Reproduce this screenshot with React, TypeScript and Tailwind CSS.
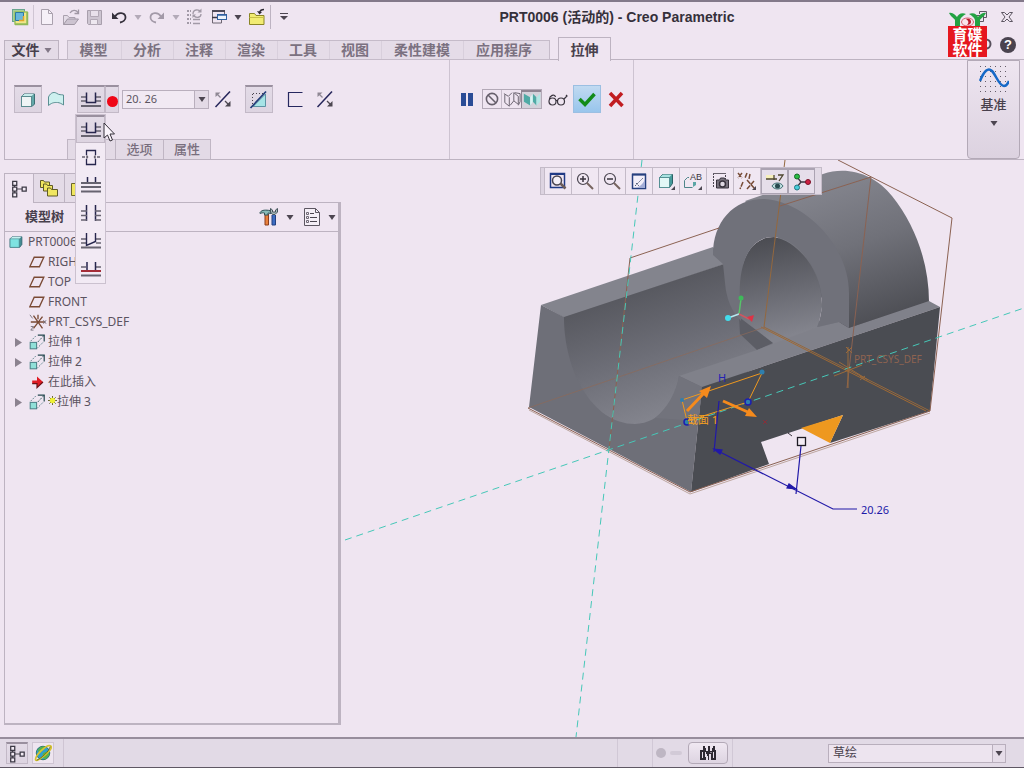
import React, { useState } from "react";
import type { ReactNode } from "react";

/* ---------- small shared pieces ---------- */

function Caret({ className = "text-[#4c4550]" }: { className?: string }) {
  return (
    <svg viewBox="0 0 8 5" className={`h-[5px] w-2 shrink-0 ${className}`} aria-hidden="true">
      <path d="M0.5 0h7L4 5z" fill="currentColor" />
    </svg>
  );
}

function Ico({ children, size = "size-5" }: { children: ReactNode; size?: string }) {
  return (
    <svg viewBox="0 0 20 20" className={`${size} shrink-0`} fill="none" aria-hidden="true">
      {children}
    </svg>
  );
}

function QuickButton({ label, width = "w-6", children }: { label: string; width?: string; children: ReactNode }) {
  return (
    <button type="button" aria-label={label} className={`flex h-6 shrink-0 items-center justify-center ${width}`}>
      {children}
    </button>
  );
}

/* ---------- icons ---------- */

const AppIcon = () => (
  <Ico>
    <rect x="2.500" y="2.500" width="12" height="12" fill="#a7cf9a" stroke="#6aa58f" />
    <path d="M5 5h12v12H5z" fill="#f0e58a" stroke="#9cc25c" strokeWidth="1.500" />
    <path d="M5.500 5.500h8v8h-8z" fill="#68b7dc" stroke="#2d7aa5" />
    <path d="M13.500 9v4.500H9" stroke="#e1a629" strokeWidth="1.500" />
    <path d="M5 17.500h12.500V5" stroke="#8fb85a" strokeWidth="1.500" />
  </Ico>
);
const NewIcon = () => (
  <Ico>
    <path d="M4.500 2.500h7l4 4v11h-11z" fill="#f6f0f8" stroke="#aaa1ae" />
    <path d="M11.500 2.500v4h4" stroke="#aaa1ae" />
  </Ico>
);
const OpenIcon = () => (
  <Ico>
    <path d="M2.500 17.500v-9h4l1.500 2h6v2" fill="#e4dce7" stroke="#aaa1ae" />
    <path d="M2.500 17.500l4-5.500h11l-4 5.500z" fill="#ccc3d0" stroke="#a097a4" />
    <path d="M9 6c2-3.500 6-3.500 8-.5M17.500 2.500v4h-4" stroke="#a097a4" strokeWidth="1.300" />
  </Ico>
);
const SaveIcon = () => (
  <Ico>
    <path d="M3.500 3.500h14v14h-13l-1-1z" fill="#cdc5d1" stroke="#a89fac" />
    <path d="M6.500 3.500h8v6h-8z" fill="#e8e1eb" stroke="#b2a9b6" />
    <path d="M6.500 12.500h7v5h-7z" fill="#eee8f0" stroke="#b2a9b6" />
  </Ico>
);
const UndoIcon = ({ color }: { color: string }) => (
  <Ico>
    <path d="M6 9.500C9 4.500 16 5.500 16.500 10c.3 3-2.500 5-5.500 5.500" stroke={color} strokeWidth="1.800" />
    <path d="M3 5.500v6.500h6.500z" fill={color} />
  </Ico>
);
const RedoIcon = ({ color }: { color: string }) => (
  <Ico>
    <path d="M14 9.500C11 4.500 4 5.500 3.500 10c-.3 3 2.500 5 5.500 5.500" stroke={color} strokeWidth="1.800" />
    <path d="M17 5.500v6.500h-6.500z" fill={color} />
  </Ico>
);
const RegenIcon = () => (
  <Ico>
    <path d="M3 4h4M3 8h4M3 12h4M3 16h4" stroke="#a29aa7" strokeWidth="2" strokeDasharray="2 1" />
    <path d="M9 12.500h7M9 16.500h7" stroke="#a29aa7" strokeWidth="1.500" />
    <path d="M9 7c0-5 6-5 7.500-2M17 7c0 4-5 4-7 2" stroke="#a29aa7" strokeWidth="1.300" />
    <path d="M17.500 1.500v4h-4zM8.500 11V7.500H12z" fill="#a29aa7" />
  </Ico>
);
const WindowsIcon = () => (
  <Ico>
    <path d="M3.500 4.500h12v3" stroke="#6d6672" />
    <path d="M3 4h13" stroke="#4f4a58" strokeWidth="2" />
    <path d="M3.500 5v11h9v-3" stroke="#6d6672" />
    <path d="M3 10.500h6" stroke="#3a3846" strokeWidth="1.500" />
    <rect x="8.500" y="7.500" width="9" height="5" fill="#eef4fb" stroke="#3261a0" />
    <path d="M8 8h10" stroke="#3261a0" strokeWidth="1.500" />
  </Ico>
);
const CloseWindowIcon = () => (
  <Ico>
    <path d="M2.500 17.500v-11h5l1.500 2h8v9z" fill="#f2ec73" stroke="#8a8526" />
    <path d="M2.500 10.500h14.500" stroke="#c9c147" />
    <path d="M17 2.500c-2.500 0-4 1-4.500 3" stroke="#2e2a34" strokeWidth="1.300" />
    <path d="M10 4l2.500 3.500L15 5z" fill="#2e2a34" />
  </Ico>
);

const SolidIcon = () => (
  <Ico>
    <path d="M3.500 6.500l2.500-2.500h10.500v10l-2.500 2.500h-10.500z" fill="#62a9a9" stroke="#3c6f74" />
    <rect x="3.500" y="6.500" width="10" height="10" fill="#eef4f5" stroke="#5a8b8f" />
    <path d="M4 6l2.500-2h9.500L13.500 6z" fill="#c7eceb" />
  </Ico>
);
const SurfaceIcon = () => (
  <Ico>
    <path d="M2.500 16.500V8C5 2.500 9 3 11 4.500s4 1 6.500 1.500v10c-1.500-1-4-2.500-6-2.500s-5-.5-9 3z" fill="#cdf0ef" stroke="#5b8f93" />
  </Ico>
);

const NAVY = "#27264d";
const GREY = "#676370";
const DEPTH_OPTIONS: { label: string; draw: ReactNode }[] = [
  {
    label: "盲孔",
    draw: (
      <>
        <path d="M0 7h5M15 7h5M0 11h5M15 11h5" stroke={GREY} strokeWidth="1.500" />
        <path d="M5.500 2.500v10h9v-10" stroke={NAVY} strokeWidth="1.500" />
        <path d="M0 16h20" stroke={GREY} strokeWidth="2" />
      </>
    ),
  },
  {
    label: "对称",
    draw: (
      <>
        <path d="M5.500 8V3.500h9V8M5.500 12v5.500h9V12" stroke={NAVY} strokeWidth="1.300" />
        <path d="M1 10h3M5 10h2M13 10h2M16 10h3" stroke={GREY} strokeWidth="1.300" />
        <path d="M5.500 8l1.500 2-1.500 2M14.500 8L13 10l1.500 2" stroke={GREY} />
      </>
    ),
  },
  {
    label: "到下一个",
    draw: (
      <>
        <path d="M6.500 2v5M14.500 2v5" stroke={NAVY} strokeWidth="1.500" />
        <path d="M0 8h20M0 12h20M0 16.500h20" stroke={GREY} strokeWidth="2" />
      </>
    ),
  },
  {
    label: "穿透",
    draw: (
      <>
        <path d="M5.500 2v16M14.500 2v16" stroke={NAVY} strokeWidth="1.500" />
        <path d="M0 8h6M0 12.500h6M0 17h6M14 8h6M14 12.500h6M14 17h6" stroke={GREY} strokeWidth="1.700" />
      </>
    ),
  },
  {
    label: "穿至",
    draw: (
      <>
        <path d="M0 8h5M0 12h5M15 8h5M15 12h5" stroke={GREY} strokeWidth="1.500" />
        <path d="M5.500 2v12.500l9-4V2" stroke={NAVY} strokeWidth="1.400" />
        <path d="M0 16.500h20" stroke={GREY} strokeWidth="2" />
      </>
    ),
  },
  {
    label: "到选定项",
    draw: (
      <>
        <path d="M0 8h5M15 8h5" stroke={GREY} strokeWidth="1.500" />
        <path d="M6 3v8M14.500 3v8" stroke={NAVY} strokeWidth="1.500" />
        <path d="M0 12h20" stroke="#a42d38" strokeWidth="2" />
        <path d="M0 16.500h20" stroke={GREY} strokeWidth="2" />
      </>
    ),
  },
];

const FlipIcon = () => (
  <Ico>
    <path d="M2.500 18L17 2.500" stroke="#25255a" strokeWidth="1.500" />
    <path d="M4 5l3.500 3.500" stroke="#8f8894" strokeWidth="1.300" />
    <path d="M2.500 3.500h5L2.500 8z" fill="#8f8894" />
    <path d="M12 12l4 4" stroke="#4c4750" strokeWidth="1.300" />
    <path d="M17.500 17.500V12L12 17.500z" fill="#4c4750" />
  </Ico>
);
const RemoveMaterialIcon = () => (
  <Ico>
    <path d="M4 16.500L16.500 4v12.500z" fill="#a6e4e6" stroke="#5d93a4" />
    <path d="M4 3.500h10M3.500 4v10" stroke="#48434d" strokeDasharray="1 2" />
    <path d="M1.500 18L17 1.500" stroke="#223c79" strokeWidth="1.700" />
  </Ico>
);
const ThickenIcon = () => (
  <Ico>
    <path d="M17.500 3.500h-14v14h14" stroke="#26285f" strokeWidth="1.200" />
  </Ico>
);

const PlaneIcon = () => (
  <Ico size="size-4">
    <path d="M6.500 4h12l-5.500 12h-12z" stroke="#7a4a35" strokeWidth="1.700" />
  </Ico>
);
const CsysIcon = () => (
  <Ico size="size-[18px]">
    <path d="M2 10h16M5 3l10 14M15 4L5 17M10 2v5" stroke="#7a4a35" strokeWidth="1.500" />
    <path d="M1 2l3 4M16 8l3 4M19 8l-3 4M2 15h3l-3 4h3" stroke="#77707c" />
  </Ico>
);
const ExtrudeIcon = () => (
  <Ico size="size-4">
    <rect x="1.500" y="10.500" width="8" height="8" fill="#8fe0d8" stroke="#4c8288" strokeWidth="1.300" />
    <path d="M2 9l7-7M10 18l8-8" stroke="#376c72" strokeDasharray="2 1.500" />
    <path d="M11 1.500h8v8" stroke="#23474e" strokeWidth="1.500" />
    <path d="M19 1.500L11 10" stroke="#23474e" strokeDasharray="3 1.500" />
  </Ico>
);
const InsertIcon = () => (
  <Ico size="size-4">
    <path d="M4 8h6V3l7.500 7L10 17v-5H4z" fill="#e01c25" />
    <path d="M4 12h6v5l7.500-7" stroke="#6b1116" strokeWidth="1.500" />
  </Ico>
);
const SparkIcon = () => (
  <Ico size="size-[9px]">
    <path d="M10 0v20M0 10h20M3 3l14 14M17 3L3 17" stroke="#57561d" strokeWidth="2" />
    <circle cx="10" cy="10" r="6" fill="#eef035" />
  </Ico>
);
const TreeIcon = () => (
  <Ico size="size-[18px]">
    <path d="M5 5v10M6 10h9" stroke="#49454e" strokeWidth="1.300" />
    <path d="M3 1.500h4.500V6H3zM3 7.800h4.500v4.500H3zM3 14.200h4.500v4.500H3zM13.500 7.800H18v4.500h-4.500z" fill="#f2ebf4" stroke="#3b3844" strokeWidth="1.400" />
  </Ico>
);
const FoldersIcon = () => (
  <Ico>
    <g fill="#f0e660" stroke="#5f5b26">
      <path d="M1.500 9.500v-7h3l1 1.500h5v5.500z" />
      <path d="M4.500 13v-7h3l1 1.500h5V13z" />
      <path d="M8.500 18V10h3l1 1.500h6V18z" />
    </g>
  </Ico>
);
const FolderStarIcon = () => (
  <Ico>
    <path d="M3.500 17.500v-12h4l1.500 2h8v10z" fill="#f0e660" stroke="#6d6829" />
  </Ico>
);
const ToolsIcon = () => (
  <Ico>
    <path d="M6 7v11h3.500V7" fill="#e9813d" stroke="#8b3d1c" />
    <path d="M1 5.500c2-3 6-2.500 10-2l1 3-3-.5v2H5.500V6C4 5.500 2 6 1 6.500z" fill="#86bcb8" stroke="#34545b" />
    <path d="M13 8v10h3.500V8" fill="#3c6cc2" stroke="#234080" />
    <path d="M11.500 1.500v3.500l2 2.500h2.500l2.500-2.500V1.500L16.500 3v2h-3V3z" fill="#a5b9bb" stroke="#46555b" />
  </Ico>
);
const ListIcon = () => (
  <Ico>
    <path d="M2.500 1.500h11l4 4v13h-15z" fill="#f4eef6" stroke="#5c5661" />
    <path d="M13.500 1.500v4h4" stroke="#5c5661" />
    <path d="M8 6.500h4M8 10.500h7M8 14.500h7" stroke="#4a454f" />
    <path d="M4.500 5.500h2v2h-2zM4.500 9.500h2v2h-2zM4.500 13.500h2v2h-2z" stroke="#6f6874" />
  </Ico>
);

/* ---------- title bar ---------- */

function TitleBar() {
  return (
    <header className="flex h-[37px] items-center border-t-2 border-[#83798a] pb-[5px] pl-[7px]">
      <QuickButton label="Creo" width="w-[26px]"><AppIcon /></QuickButton>
      <span className="h-6 w-px bg-[#cfc5d3]" />
      <QuickButton label="新建" width="w-[26px]"><NewIcon /></QuickButton>
      <QuickButton label="打开" width="w-[22px]"><OpenIcon /></QuickButton>
      <QuickButton label="保存"><SaveIcon /></QuickButton>
      <QuickButton label="撤消" width="w-[26px]"><UndoIcon color="#35313c" /></QuickButton>
      <QuickButton label="撤消列表" width="w-3"><Caret className="text-[#b3aab8]" /></QuickButton>
      <QuickButton label="重做" width="w-[26px]"><RedoIcon color="#a39aa8" /></QuickButton>
      <QuickButton label="重做列表" width="w-3"><Caret className="text-[#b3aab8]" /></QuickButton>
      <QuickButton label="重新生成"><RegenIcon /></QuickButton>
      <QuickButton label="窗口" width="w-[26px]"><WindowsIcon /></QuickButton>
      <QuickButton label="窗口列表" width="w-3"><Caret /></QuickButton>
      <QuickButton label="关闭窗口" width="w-[26px]"><CloseWindowIcon /></QuickButton>
      <span className="h-6 w-px bg-[#bdb3c2]" />
      <QuickButton label="自定义快速访问工具栏" width="w-[26px]">
        <svg viewBox="0 0 8 8" className="size-2" aria-hidden="true">
          <path d="M0 .5h8" stroke="#4c4550" />
          <path d="M0 3h8L4 7z" fill="#4c4550" />
        </svg>
      </QuickButton>
      <h1 className="min-w-0 flex-1 truncate text-center font-['Liberation_Sans','Noto_Sans_CJK_SC',sans-serif] text-[14px] font-bold text-[#35303a]">
        PRT0006 (活动的) - Creo Parametric
      </h1>
      <div className="flex w-[87px] justify-end gap-3 pr-[10px]">
        <button type="button" aria-label="还原">
          <svg viewBox="0 0 14 14" className="size-[14px]" fill="none" stroke="#5e5763" aria-hidden="true">
            <path d="M5.500 4V1.500h7v6H10M1.500 5.500h8v6h-8z" />
          </svg>
        </button>
        <button type="button" aria-label="关闭">
          <svg viewBox="0 0 14 14" className="size-[14px]" fill="none" stroke="#5e5763" aria-hidden="true">
            <path d="M1.500 2.500h3L7 5l2.500-2.500h3L9 7l3.500 4.500h-3L7 9l-2.500 2.500h-3L5 7z" />
          </svg>
        </button>
      </div>
    </header>
  );
}

/* ---------- ribbon ---------- */

const TABS = ["模型", "分析", "注释", "渲染", "工具", "视图", "柔性建模", "应用程序"];

function TabStrip() {
  return (
    <nav className="flex h-[23px] items-end pl-1 text-[14px] leading-[18px] font-bold text-[#7b7180]">
      <button type="button" className="flex h-5 w-[55px] shrink-0 items-center justify-center gap-1 border border-[#bdb3c1] bg-[#e4dbe7] text-[#48404c]">
        文件 <Caret className="text-[#817786]" />
      </button>
      <span className="h-px w-2 shrink-0 bg-[#bdb3c1]" />
      <div className="flex h-5 shrink-0 items-center border border-[#c5bbc9] bg-[#e5dce8] pr-[3px]">
        {TABS.map((t, i) => (
          <button
            key={t}
            type="button"
            className={`${t.length > 2 ? "w-[83px]" : "w-[53px]"} pr-[3px] ${i > 0 ? "-ml-px border-l border-[#d8cfdc] pl-px" : "w-[54px]"}`}
          >
            {t}
          </button>
        ))}
      </div>
      <span className="h-px min-w-2 shrink-0 bg-[#bdb3c1]" />
      <button type="button" className="-mb-px h-6 w-[53px] shrink-0 border border-b-0 border-[#bdb3c1] bg-[#efe5f1] text-[#48404c]">
        拉伸
      </button>
      <span className="h-px min-w-4 flex-1 bg-[#bdb3c1]" />
      <div className="flex h-[23px] w-[44px] shrink-0 items-start justify-between border-b border-[#bdb3c1] pr-2">
        <svg viewBox="0 0 16 16" className="size-4" fill="none" aria-hidden="true">
          <circle cx="6" cy="7" r="4.500" stroke="#57505c" strokeWidth="2" />
        </svg>
        <button type="button" aria-label="帮助" className="flex size-4 items-center justify-center rounded-full bg-[#4a434f] font-['Liberation_Sans',sans-serif] text-[13px] leading-4 text-white">
          ?
        </button>
      </div>
    </nav>
  );
}

function SproutLogo() {
  return (
    <div className="absolute top-[11px] right-[37px] z-10 w-[39px]">
      <svg viewBox="0 0 39 15" className="block h-[15px] w-full" aria-hidden="true">
        <path d="M1 2c4-1 6 2 8 4 1-2 4-5 9-3-3 2-5 3-6 6v6H7v-6C6 7 3 6 1 2z" fill="#23a243" />
        <path d="M38 2c-4-1-6 2-8 4-1-2-4-5-9-3 3 2 5 3 6 6v6h5v-6c1-2 4-3 6-7z" fill="#23a243" />
        <ellipse cx="19.500" cy="11" rx="6" ry="4" fill="#f9e3ea" stroke="#d8606f" />
        <path d="M18 8c4-1 5 1 5 3s-2 3-4 3c2-2 2-4-1-6z" fill="#b9182c" />
      </svg>
      <div className="bg-[#e6171f] px-1 pb-px text-center font-['Noto_Sans_CJK_SC',sans-serif] text-[15px] leading-[15px] font-bold break-all text-white">
        育碟软件
      </div>
    </div>
  );
}

const PRESSED = "border border-t-2 border-[#c3b9c7] border-t-[#9a909f] bg-linear-to-b from-[#e3dbe7] to-[#ddd4e1]";

function DepthPicker() {
  const [picked, setPicked] = useState(0);
  return (
    <div className="relative flex shrink-0">
      <button type="button" aria-label="深度选项" className={`flex size-7 items-center justify-center ${PRESSED}`}>
        <Ico>{DEPTH_OPTIONS[picked].draw}</Ico>
      </button>
      <button type="button" aria-label="展开深度选项" className={`flex h-7 w-[14px] items-center justify-center pt-1 ${PRESSED}`}>
        <svg viewBox="0 0 10 10" className="size-[11px] shrink-0" aria-hidden="true"><circle cx="5" cy="5" r="5" fill="#ef0717" /></svg>
      </button>
      <ul className="absolute top-[29px] -left-[2px] z-20 w-[31px] border border-[#cbc1cf] bg-[#f2eaf4]">
        {DEPTH_OPTIONS.map((o, i) => (
          <li key={o.label}>
            <button
              type="button"
              aria-label={o.label}
              onClick={() => setPicked(i)}
              className={`flex h-7 w-full items-center justify-center ${i === picked ? PRESSED : ""}`}
            >
              <Ico>{o.draw}</Ico>
            </button>
          </li>
        ))}
      </ul>
      <svg viewBox="0 0 12 20" className="absolute top-[37px] left-[26px] z-30 h-5 w-3" aria-hidden="true">
        <path d="M1 1v15l3.500-3 2.500 6 2.500-1-2.500-6h4.500z" fill="#fbf5fc" stroke="#35303a" />
      </svg>
    </div>
  );
}

function Dashboard() {
  return (
    <section className="ml-1 flex h-[100px] border-b border-l border-[#bdb3c1]">
      <div className="flex w-[445px] shrink-0 flex-col justify-between border-r border-[#cdc3d1] pt-[25px]">
        <div className="flex items-center pl-[9px]">
          <button type="button" aria-label="实体" className={`flex size-7 items-center justify-center ${PRESSED}`}><SolidIcon /></button>
          <button type="button" aria-label="曲面" className="mr-[7px] flex size-7 items-center justify-center"><SurfaceIcon /></button>
          <DepthPicker />
          <div className="ml-[3px] flex h-[19px] w-[87px] shrink-0 border border-[#b9afbd] bg-[#f1e9f3]">
            <input
              aria-label="深度值"
              defaultValue="20. 26"
              className="min-w-0 flex-1 bg-transparent pl-[3px] font-['Noto_Sans',sans-serif] text-[11px] text-[#5c5561] outline-none"
            />
            <button type="button" aria-label="深度值列表" className="flex w-[14px] items-center justify-center border-l border-[#b9afbd] bg-[#e3dae6]"><Caret /></button>
          </div>
          <button type="button" aria-label="反向" className="mr-2 flex size-7 items-center justify-center"><FlipIcon /></button>
          <button type="button" aria-label="移除材料" className={`mr-2 flex size-7 items-center justify-center ${PRESSED}`}><RemoveMaterialIcon /></button>
          <button type="button" aria-label="加厚" className="mr-[2px] flex size-7 items-center justify-center"><ThickenIcon /></button>
          <button type="button" aria-label="反向厚度" className="flex size-7 items-center justify-center"><FlipIcon /></button>
        </div>
        <div className="ml-[62px] flex w-fit border border-b-0 border-[#c0b6c4] bg-[#e3dae6] text-[13px] leading-[19px] font-medium text-[#786e7d]">
          <button type="button" className="w-[47px]">放置</button>
          <button type="button" className="w-12 border-l border-[#c0b6c4]">选项</button>
          <button type="button" className="w-[47px] border-l border-[#c0b6c4]">属性</button>
        </div>
      </div>
      <div className="flex w-[184px] shrink-0 items-start border-r border-[#cdc3d1] pt-[25px]">
        <button type="button" aria-label="暂停" className="ml-[3px] flex size-7 items-center justify-center">
          <Ico><path d="M4 4h5v13H4zM11 4h5v13h-5z" fill="#2a4c96" /></Ico>
        </button>
        <div className="mt-1 ml-px flex h-5 w-[60px] shrink-0 border border-[#b3a9b7]">
          <button type="button" aria-label="无预览" className="flex w-[18px] items-center justify-center">
            <Ico size="size-4"><circle cx="10" cy="10" r="7" stroke="#67606c" strokeWidth="2" /><path d="M5 5l10 10" stroke="#67606c" strokeWidth="2" /></Ico>
          </button>
          <button type="button" aria-label="未附着" className="flex w-5 items-center justify-center border-l border-[#c6bcca]">
            <Ico size="size-[18px]"><path d="M1 4l5 3 4-4M2 5v9l5 4V8M8 17l4-5V3l5 4v9l-5-4M13 3l6 1v9l-2 4" stroke="#6d6672" strokeWidth="1.100" /></Ico>
          </button>
          <button type="button" aria-label="附着" className="flex w-5 items-center justify-center border-t-2 border-l border-[#8f8593] bg-[#d3d2db]">
            <Ico size="size-[18px]"><path d="M1 3l7 4v9l-7-4z" fill="#4faaa5" /><path d="M8 7l3-4v9l-3 4z" fill="#d7f5f3" /><path d="M11 3l4 4v9l-4-4z" fill="#4faaa5" /><path d="M15 7l4-4v9l-4 4z" fill="#b2e7e5" /></Ico>
          </button>
        </div>
        <button type="button" aria-label="特征预览" className="ml-[2px] flex size-7 items-center justify-center">
          <Ico><circle cx="4.500" cy="12.500" r="3.500" stroke="#39343e" strokeWidth="1.200" /><circle cx="13" cy="12.500" r="3.500" stroke="#39343e" strokeWidth="1.200" /><path d="M8 11.500h1.500M1.500 10c0-3 5-6 6-2M16 10l3-3-1-1" stroke="#39343e" strokeWidth="1.200" /></Ico>
        </button>
        <button type="button" aria-label="确定" className="ml-px flex size-7 items-center justify-center border border-[#9bbfe2] bg-linear-to-b from-[#c1daf1] to-[#98c5ec]">
          <Ico><path d="M2.500 10l5.500 5.500L17.500 5" stroke="#128b18" strokeWidth="3.500" /></Ico>
        </button>
        <button type="button" aria-label="取消" className="ml-px flex size-7 items-center justify-center">
          <Ico><path d="M4 4l12.500 13M16 4L4 17" stroke="#c11d21" strokeWidth="3.500" /></Ico>
        </button>
      </div>
      <button type="button" className="mr-1 ml-auto flex w-[53px] shrink-0 flex-col items-center rounded-b border border-[#b3a9b7] bg-linear-to-b from-[#eee5f0] to-[#dcd2e0] pt-[3px] text-[13px] leading-[18px] font-medium text-[#48404c]">
        <svg viewBox="0 0 30 30" className="size-[30px]" aria-hidden="true">
          {[2, 7, 12, 17, 22, 27].map((y) => (
            <path key={y} d={`M1 ${y}.500h29`} stroke="#655e6a" strokeDasharray="1 4" />
          ))}
          <path d="M1 17C5 7 9 3 13 7s7 15 12 15c3 0 4-3 5-5" fill="none" stroke="#1669c7" strokeWidth="2.500" />
        </svg>
        <span className="mt-px mb-2">基准</span>
        <Caret />
      </button>
    </section>
  );
}

/* ---------- model tree ---------- */

type TreeNode = { text: string; icon: ReactNode; open?: boolean; spark?: boolean };
const NODES: TreeNode[] = [
  { text: "RIGHT", icon: <PlaneIcon /> },
  { text: "TOP", icon: <PlaneIcon /> },
  { text: "FRONT", icon: <PlaneIcon /> },
  { text: "PRT_CSYS_DEF", icon: <CsysIcon /> },
  { text: "拉伸 1", icon: <ExtrudeIcon />, open: true },
  { text: "拉伸 2", icon: <ExtrudeIcon />, open: true },
  { text: "在此插入", icon: <InsertIcon /> },
  { text: "拉伸 3", icon: <ExtrudeIcon />, open: true, spark: true },
];

function ModelTree() {
  return (
    <aside className="flex w-[337px] shrink-0 flex-col pt-[13px] pb-3">
      <div className="flex h-[30px] shrink-0">
        <button type="button" aria-label="模型树" className="flex w-[30px] items-center justify-center border border-b-0 border-[#bdb3c1]"><TreeIcon /></button>
        <button type="button" aria-label="文件夹浏览器" className="flex w-[30px] items-center justify-center border-t border-b border-[#bdb3c1] bg-[#e4dbe7]"><FoldersIcon /></button>
        <button type="button" aria-label="收藏夹" className="flex w-7 items-center justify-center border border-[#bdb3c1] bg-[#e4dbe7]"><FolderStarIcon /></button>
        <span className="flex-1 border-b border-[#bdb3c1]" />
      </div>
      <div className="flex flex-1 flex-col border-r-3 border-b-2 border-l border-[#bdb3c1]">
        <div className="flex h-[29px] items-center border-b border-[#bdb3c1] pl-5">
          <h2 className="flex-1 text-[13px] font-bold text-[#48404c]">模型树</h2>
          <button type="button" aria-label="设置" className="flex w-[43px] items-center gap-[7px]"><ToolsIcon /><Caret /></button>
          <button type="button" aria-label="显示" className="flex w-[36px] items-center gap-[6px]"><ListIcon /><Caret /></button>
        </div>
        <ul className="text-[12px] leading-5 text-[#5b5360]">
          <li className="flex h-5 items-center gap-[5px] pl-1">
            <Ico size="size-[14px]"><path d="M1.500 5.500l3-3h14v11l-3 4h-14z" fill="#448c93" stroke="#2f5d68" /><rect x="1.500" y="5.500" width="13" height="12" fill="#7ee3e1" stroke="#4a898f" /><path d="M2 5l3-2.500h13L15 5z" fill="#c6f2f1" /></Ico>
            <span>PRT0006.PRT</span>
          </li>
          {NODES.map((n) => (
            <li key={n.text} className="flex h-5 items-center pl-[9px]">
              <span className="flex w-[15px] shrink-0 items-center">
                {n.open && (
                  <svg viewBox="0 0 8 9" className="h-[9px] w-2" aria-hidden="true"><path d="M1 0l7 4.500L1 9z" fill="#8b828f" /></svg>
                )}
              </span>
              <span className="flex w-[19px] shrink-0 items-center">{n.icon}</span>
              {n.spark && <span className="mb-1"><SparkIcon /></span>}
              <span>{n.text}</span>
            </li>
          ))}
        </ul>
      </div>
    </aside>
  );
}

/* ---------- graphics area ---------- */

const Corner = () => <path d="M19 15v4h-4z" fill="#4d4752" />;
const VIEW_TOOLS: { label: string; on?: boolean; draw: ReactNode }[] = [
  { label: "重新调整", draw: <><path d="M2.500 16.500v-14h14v14z" stroke="#203a85" strokeWidth="1.500" /><path d="M2 3h15" stroke="#203a85" strokeWidth="2" /><circle cx="9" cy="9.500" r="4.500" fill="#f6f1f8" stroke="#4a4550" strokeWidth="1.500" /><path d="M12.500 12.500l5 5" stroke="#6d5d5a" strokeWidth="2.500" /></> },
  { label: "放大", draw: <><circle cx="8" cy="8" r="5.500" stroke="#4a4550" strokeWidth="1.200" /><path d="M5 8h6M8 5v6" stroke="#39343e" strokeWidth="1.500" /><path d="M12 12l6 6" stroke="#76645f" strokeWidth="2" /></> },
  { label: "缩小", draw: <><circle cx="8" cy="8" r="5.500" stroke="#4a4550" strokeWidth="1.200" /><path d="M5 8h6" stroke="#39343e" strokeWidth="1.500" /><path d="M12 12l6 6" stroke="#76645f" strokeWidth="2" /></> },
  { label: "重画", draw: <><rect x="3.500" y="3.500" width="13" height="14" fill="#f3eff9" stroke="#27407f" strokeWidth="1.500" /><path d="M16 8v9H6c5-1 8-4 10-9z" fill="#a3add7" /><path d="M6 15l8-8M7 12l3 3" stroke="#55607a" strokeDasharray="2 1" /><path d="M3 3.500h14" stroke="#27407f" strokeWidth="2" /></> },
  { label: "显示样式", draw: <><path d="M3.500 6.500l3-3h10v9l-3 4h-10z" fill="#469b9b" stroke="#2d6266" /><rect x="3.500" y="6.500" width="10" height="10" fill="#e2f7f6" stroke="#569194" /><path d="M4 6l3-2.500h9L13.500 6z" fill="#a9e3e1" /><Corner /></> },
  { label: "已命名视图", draw: <><path d="M1.500 16.500V9.500l3-3H6M1.500 16.500h8" stroke="#4f858a" /><path d="M10 16l3-2v-3h-3" fill="#5ba6a6" /><text x="7" y="9" fill="#39343e" fontSize="9" fontFamily="Liberation Sans">AB</text><Corner /></> },
  { label: "视图管理器", draw: <><path d="M3.500 16V2.500h12V8" stroke="#4a4550" strokeDasharray="2 1" /><path d="M3 2.500h13" stroke="#68616c" /><path d="M6.500 9h3l1-2h4l1 2h3v8h-12z" fill="#7a747f" stroke="#37323c" /><circle cx="12.500" cy="13" r="3" fill="#ded8e2" stroke="#37323c" strokeWidth="1.500" /></> },
  { label: "基准显示过滤器", draw: <><path d="M1 2l4 5M5 2L1 7M10 2l-2 5M6 11l-3 7M10 9l8 9M17 10l-7 8M13 3l-1 5" stroke="#774c37" strokeWidth="1.500" strokeDasharray="5 1" /><Corner /></> },
  { label: "注释显示", on: true, draw: <><path d="M1 3h8v4H1" fill="#f6efbc" /><path d="M1 7h8M9 3v5M9 7h3M13 3h5l-4 6" stroke="#4d462e" strokeWidth="1.300" /><path d="M7 14c2-4 9-4 11 0-2 4-9 4-11 0z" fill="#bcdcdd" stroke="#406d73" /><circle cx="12.500" cy="14" r="2.500" fill="#27494f" /></> },
  { label: "旋转中心", on: true, draw: <><path d="M5 5l4 5-4 5M9 10h6" stroke="#3b3640" strokeWidth="1.300" /><circle cx="5" cy="4.500" r="2.500" fill="#2bbd44" stroke="#176a28" /><circle cx="5" cy="15.500" r="2.500" fill="#48cddb" stroke="#227680" /><circle cx="16" cy="10" r="2.500" fill="#cf1f42" stroke="#7b1027" /></> },
];

function ViewToolbar() {
  return (
    <div className="absolute inset-x-0 top-[7px] flex justify-center pr-[3px]">
      <div className="flex h-[28px] border border-[#c4bbc8] bg-[#f0e7f2]">
        <span className="w-1 border-r border-[#c4bbc8] bg-[#ddd4e1]" />
        {VIEW_TOOLS.map((t) => (
          <button
            key={t.label}
            type="button"
            aria-label={t.label}
            className={`flex w-[27px] items-center justify-center ${t.on ? "border border-t-2 border-[#aba3b2] bg-[#e6deea]" : "border-r border-[#c4bbc8]"}`}
          >
            <Ico>{t.draw}</Ico>
          </button>
        ))}
        <span className="w-[6px] bg-[#e1d9e5]" />
      </div>
    </div>
  );
}

function Scene() {
  return (
    <svg viewBox="341 160 683 577" className="absolute inset-0 size-full" role="img" aria-label="PRT0006" fill="none">
      <defs>
        <linearGradient id="groove" gradientUnits="userSpaceOnUse" x1="620" y1="295" x2="660" y2="420">
          <stop offset="0" stopColor="#57585f" />
          <stop offset="0.500" stopColor="#6d6e77" />
          <stop offset="1" stopColor="#84858e" />
        </linearGradient>
        <linearGradient id="cylinder" gradientUnits="userSpaceOnUse" x1="830" y1="180" x2="880" y2="325">
          <stop offset="0" stopColor="#84858e" />
          <stop offset="0.450" stopColor="#707179" />
          <stop offset="1" stopColor="#4c4d53" />
        </linearGradient>
        <linearGradient id="bore" gradientUnits="userSpaceOnUse" x1="770" y1="237" x2="790" y2="335">
          <stop offset="0" stopColor="#4b4c52" />
          <stop offset="0.550" stopColor="#696a72" />
          <stop offset="1" stopColor="#83848d" />
        </linearGradient>
      </defs>

      {/* part */}
      <path d="M541 305L713 247L725 264L565 318z" fill="#83848d" />
      <path d="M564 317L724 264H745V322H849L690 400L640 440L590 425L562 380z" fill="url(#groove)" />
      <path d="M745 201L823 174C848 165 876 175 892 196C916 226 929 264 929 302L845 330L780 240z" fill="url(#cylinder)" />
      <path d="M740 300C737 262 750 237 774 237C800 242 823 273 822 307L818 328L775 345L740 320z" fill="url(#bore)" />
      <path d="M739 317L773 343L757 350L740 334z" fill="#5c5d65" />
      <path d="M757 350L818 327L839 322L849 328L929 301L940 307L702 387L679 376z" fill="#80818a" />
      <path
        d="M713 255C713 222 733 199 764 199C804 201 849 245 849 293V328L839 322L817 327C821 318 822 307 822 301C820 268 798 237 771 237C748 239 738 267 740 300L741 321Q727 307 725 283L723 264z"
        fill="#70717a"
      />
      <path d="M541 305L564 317C564 370 592 424 635 424C661 423 676 400 679 376L702 387L691 492L529 407z" fill="#6e6f78" />
      <path d="M679 376L702 387L698 421L655 418Q674 402 679 376z" fill="#72737c" />
      <path d="M702 387L940 307L930 411L830 443L843 415L761 442L769 464L691 492z" fill="#4a4c52" />
      <path d="M801 428L843 415L830 443z" fill="#ee981f" />

      {/* datum plane outlines */}
      <g stroke="#8b6252">
        <path d="M528 408L690 492L930 411L952 218L838 160" />
        <path d="M630 258L719 228" />
        <path d="M780 206L871 177L847 388" />
        <path d="M630 258L609 450" />
        <path d="M785 160L764 327L930 411" stroke="#94683e" />
        <path d="M761 327L926 411" stroke="#a06a34" />
        <path d="M528 408L765 327" stroke="#8d6a58" strokeOpacity="0.700" />
        <path d="M529 410L690 494L930 413" stroke="#bca69f" />
      </g>
      <g stroke="#46c8b8" strokeDasharray="7 5">
        <path d="M345 540L1024 308" />
        <path d="M642 160L576 737" />
      </g>

      {/* coordinate system */}
      <g stroke="#9a6a3b">
        <path d="M848 347V388M834 376L862 365M839 362L868 380M846 347l6 6M852 347l-6 6M860 376l5 4M865 376l-5 4" />
      </g>
      <text x="854" y="363" fontSize="10" fill="#8e6350" fontFamily="Noto Sans">PRT_CSYS_DEF</text>

      {/* spin center */}
      <path d="M739 314L741 299" stroke="#58c26b" strokeWidth="1.500" />
      <path d="M739 314L728 318" stroke="#b5e9ef" strokeWidth="1.500" />
      <path d="M739 314L749 319" stroke="#cf5660" strokeWidth="1.500" />
      <circle cx="741" cy="298" r="2.500" fill="#3fb95a" />
      <circle cx="728" cy="318" r="3" fill="#43dcec" />
      <path d="M747 317L754 315L752 322z" fill="#dd3346" />

      {/* sketch section */}
      <path d="M682 400L762 373L748 402L687 421z" stroke="#ee981f" />
      <path d="M723 401L750 413M687 411L704 393" stroke="#f58a1c" strokeWidth="3" />
      <path d="M711 386L699 391L707 398zM757 417L749 408L745 416z" fill="#f58a1c" />
      <g fill="#2f7fae">
        <circle cx="762" cy="372" r="2.500" />
        <circle cx="682" cy="400" r="2" />
        <circle cx="748" cy="402" r="3" stroke="#1c20b0" strokeWidth="1.500" />
        <circle cx="687" cy="422" r="3" stroke="#1c20b0" strokeWidth="1.500" />
      </g>
      <path d="M763 420l4 4M767 420l-4 4" stroke="#862f3a" />

      {/* depth dimension */}
      <g stroke="#2119a8" strokeWidth="1.200">
        <path d="M719 401L714 452M714 449L833 509H857M801 446L796 494" />
        <path d="M714 449L722 450L720 454zM796 489L789 484L787 488z" fill="#2119a8" />
      </g>
      <rect x="797.500" y="437.500" width="8" height="8" fill="#f3ecf5" stroke="#1f1b24" strokeWidth="1.300" />
      <path d="M788 433L792 436" stroke="#37323c" />
      <text x="687" y="424" fontSize="11" fill="#f5a021" fontFamily="Noto Sans, Noto Sans CJK SC">截面 1</text>
      <text x="718" y="382" fontSize="11" fill="#2422b4" fontFamily="Noto Sans">H</text>
      <text x="861" y="514" fontSize="11" fill="#2119a8" fontFamily="Noto Sans">20.26</text>
    </svg>
  );
}

/* ---------- status bar ---------- */

function StatusBar() {
  return (
    <footer className="flex h-[31px] shrink-0 items-center border-t-2 border-b border-[#978d9c] border-b-[#5e5763] bg-[#e2dae6] pl-[6px]">
      <button type="button" aria-label="导航器" className={`mr-1 flex h-[22px] w-[22px] items-center justify-center ${PRESSED}`}><TreeIcon /></button>
      <button type="button" aria-label="浏览器" className="flex h-[22px] w-[22px] items-center justify-center border border-[#cfc5d3] bg-[#eee5f0]">
        <Ico size="size-[18px]">
          <circle cx="10" cy="10" r="7.500" fill="#2f9fd0" stroke="#28705c" />
          <path d="M4 7c2-4 6-5 8-4l-3 5-3 2zM10 10l5-2 2 4-4 5-4-2z" fill="#56b34a" />
          <path d="M2 18C0 14 14 0 18 2s-3 8-8 12-7 5-8 4z" stroke="#d6c32f" strokeWidth="2" />
          <path d="M3 18C8 16 17 8 18 3" stroke="#5d6323" />
        </Ico>
      </button>
      <span className="ml-[9px] h-full w-px bg-[#cfc5d3]" />
      <span className="ml-auto h-full w-[36px] border-x border-[#d1c8d6]" />
      <span className="flex h-full w-[32px] items-center justify-center gap-1">
        <span className="size-[10px] rounded-full bg-[#beb6c3]" />
        <span className="h-1 w-3 rounded bg-[#d2cad7]" />
      </span>
      <button type="button" aria-label="查找" className="ml-[3px] flex h-[22px] w-10 items-center justify-center rounded-sm border border-[#b3a9b7] bg-linear-to-b from-[#f0e8f2] to-[#ddd4e1]">
        <Ico>
          <path d="M5 3h2v2h1v3h2V3h2v5h2V5h1V3h2v4h1v10h-5v-6h-2v6H2V7h3z" fill="#2e2933" />
          <path d="M4.500 9v6M15.500 9v6M7.500 9v5M13 9v1" stroke="#e6deea" />
          <path d="M8.500 17v-6M9.500 17v-4" stroke="#e6deea" />
        </Ico>
      </button>
      <span className="ml-1 h-full w-px bg-[#d1c8d6]" />
      <div className="relative mr-[18px] ml-[95px]">
        <select aria-label="选择过滤器" className="block h-[19px] w-[178px] appearance-none border border-[#b9afbd] bg-[#ede4ef] pl-1 text-[12px] leading-4 text-[#48404c]">
          <option>草绘</option>
        </select>
        <span className="pointer-events-none absolute inset-y-px right-px flex w-[13px] items-center justify-center border-l border-[#b9afbd] bg-[#e6dde9]"><Caret /></span>
      </div>
    </footer>
  );
}

export default function App() {
  return (
    <div className="relative flex min-h-screen flex-col bg-[#efe5f1] font-['Noto_Sans','Noto_Sans_CJK_SC',sans-serif]">
      <TitleBar />
      <TabStrip />
      <SproutLogo />
      <Dashboard />
      <main className="flex flex-1 pl-1">
        <ModelTree />
        <div className="relative min-w-0 flex-1 overflow-hidden">
          <Scene />
          <ViewToolbar />
        </div>
      </main>
      <StatusBar />
    </div>
  );
}
